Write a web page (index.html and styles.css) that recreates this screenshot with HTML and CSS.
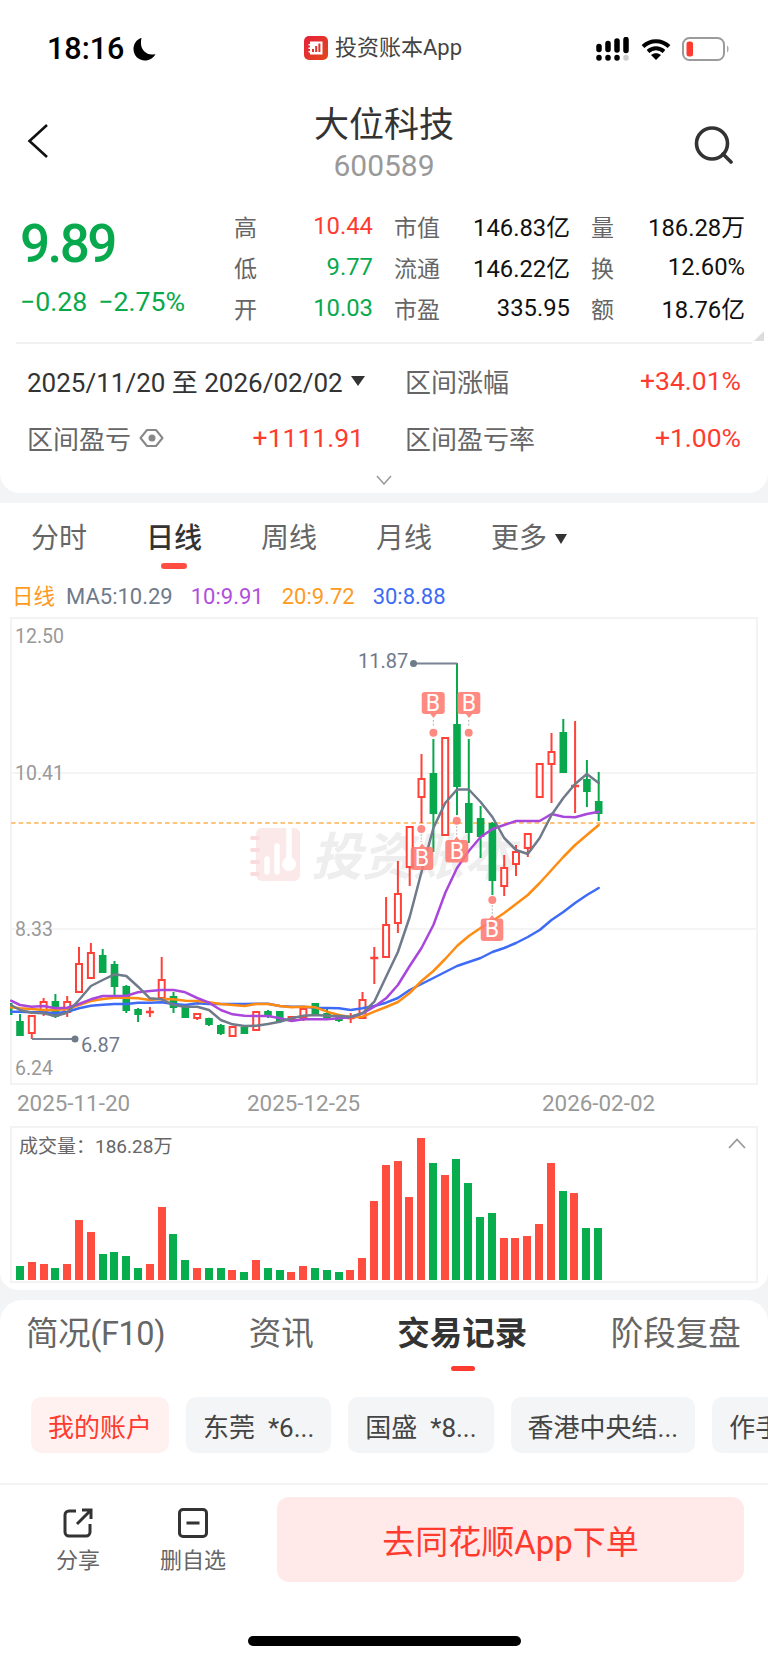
FILE: index.html
```html
<!DOCTYPE html>
<html lang="zh-CN">
<head>
<meta charset="utf-8">
<title>大位科技</title>
<link rel="stylesheet" href="styles.css">
</head>
<body>
<div class="page">
  <section class="card card-top">
    <div class="statusbar">
      <div class="sb-left">
        <span class="sb-time">18:16</span>
        <svg class="sb-moon" width="23" height="24" viewBox="0 0 23 24"><path class="fill-black" d="M8 1C3.500 2.500.5 7 .5 12c0 6.500 5 11.500 11.500 11.500 4.500 0 8.500-2.500 10.500-6.500-1 .4-2.200.6-3.500.6-6.200 0-11-5-11-11 0-1.800 0-3.500.5-5.600z"/></svg>
      </div>
      <div class="sb-center">
        <svg class="sb-logo" width="24" height="24" viewBox="0 0 24 24">
          <defs><linearGradient id="lg" x1="0" y1="0" x2="1" y2="1"><stop offset="0" stop-color="#e5203a"/><stop offset="1" stop-color="#e2491c"/></linearGradient></defs>
          <rect width="24" height="24" rx="5" fill="url(#lg)"/>
          <path class="fill-white" d="M6 5.500h12.500v13H6v-2H4.500v-1.500H6v-2H4.500v-1.500H6v-2H4.500V8H6z"/>
          <path class="logo-bars" d="M9 16v-3M12.200 16V10M15.400 16V7.500"/>
        </svg>
        <span class="sb-app">投资账本App</span>
      </div>
      <div class="sb-right">
        <svg width="34" height="24" viewBox="0 0 34 24">
          <path class="sig" d="M3 9.500v3M12 6.500v6M21 4v9M30 2.500v11"/>
          <path class="sig" d="M3 20.500v.5M12 20.500v.5M21 20.500v.5"/>
          <path class="sig sig-off" d="M30 20.500v.5"/>
        </svg>
        <svg width="32" height="23" viewBox="0 0 32 23">
          <path class="wifi" d="M3 8.500C10.500 1.500 21.500 1.500 29 8.500M8 13.500c4.800-4.200 11.200-4.200 16 0"/>
          <path class="fill-black" d="M16 22l-5-5c3-2.400 7-2.400 10 0z"/>
        </svg>
        <svg width="47" height="24" viewBox="0 0 47 24">
          <rect class="bat" x="1" y="1" width="41" height="22" rx="6.500"/>
          <rect class="bat-fill" x="4.500" y="4.500" width="6.500" height="15" rx="2.500"/>
          <path class="bat-nub" d="M45 8.500c1.200.5 1.500 1.800 1.500 3.500s-.3 3-1.500 3.500z"/>
        </svg>
      </div>
    </div>

    <header class="navbar">
      <svg class="nav-back" width="22" height="36" viewBox="0 0 22 36"><path d="M20 2L2.500 18 20 34"/></svg>
      <div class="nav-title">
        <h1 class="stock-name">大位科技</h1>
        <div class="stock-code">600589</div>
      </div>
      <svg class="nav-search" width="40" height="38" viewBox="0 0 40 38"><circle cx="18" cy="17.500" r="15.500"/><path d="M29 28l8 8"/></svg>
    </header>

    <div class="quote">
      <div class="price-box">
        <div class="price">9.89</div>
        <div class="change"><span>−0.28</span><span>−2.75%</span></div>
      </div>
      <div class="stats">
        <div class="stat"><span class="lab">高</span><span class="val red">10.44</span></div>
        <div class="stat"><span class="lab">市值</span><span class="val">146.83亿</span></div>
        <div class="stat"><span class="lab">量</span><span class="val">186.28万</span></div>
        <div class="stat"><span class="lab">低</span><span class="val green">9.77</span></div>
        <div class="stat"><span class="lab">流通</span><span class="val">146.22亿</span></div>
        <div class="stat"><span class="lab">换</span><span class="val">12.60%</span></div>
        <div class="stat"><span class="lab">开</span><span class="val green">10.03</span></div>
        <div class="stat"><span class="lab">市盈</span><span class="val">335.95</span></div>
        <div class="stat"><span class="lab">额</span><span class="val">18.76亿</span></div>
      </div>
      <span class="corner"></span>
    </div>

    <div class="range">
      <div class="range-cell">
        <span class="range-date">2025/11/20 至 2026/02/02</span><span class="caret"></span>
      </div>
      <div class="range-cell between"><span class="range-lab">区间涨幅</span><span class="range-val">+34.01%</span></div>
      <div class="range-cell between">
        <span class="range-lab with-eye">区间盈亏
          <svg width="25" height="20" viewBox="0 0 25 20"><path class="eye" d="M1.500 10L8 2h9l6.500 8L17 18H8z"/><circle class="eye-dot" cx="13" cy="10" r="3.500"/></svg>
        </span>
        <span class="range-val">+1111.91</span>
      </div>
      <div class="range-cell between"><span class="range-lab">区间盈亏率</span><span class="range-val">+1.00%</span></div>
    </div>
    <svg class="expand" width="16" height="10" viewBox="0 0 16 10"><path d="M1 1l7 8 7-8"/></svg>
  </section>

  <section class="card card-chart">
    <nav class="period-tabs">
      <span class="ptab">分时</span>
      <span class="ptab active">日线</span>
      <span class="ptab">周线</span>
      <span class="ptab">月线</span>
      <span class="ptab">更多<i class="caret caret-lg"></i></span>
    </nav>
    <div class="legend">
      <span class="c-orange">日线</span>
      <span class="c-gray">MA5:10.29</span>
      <span class="c-purple">10:9.91</span>
      <span class="c-orange">20:9.72</span>
      <span class="c-blue">30:8.88</span>
    </div>

    <svg class="kline" width="748" height="468" viewBox="10 617 748 468">
      <rect class="frame" x="11" y="618" width="746" height="466"/>
      <path class="grid" d="M11 773H757M11 929H757"/>
      <!-- watermark -->
      <rect class="wm-logo" x="256" y="828" width="44" height="53" rx="6"/>
      <path class="wm-rings" d="M252 838h6M252 850h6M252 862h6M252 874h6"/>
      <path class="wm-bars" d="M267 872v-13M277 872v-26M289 865v-36"/>
      <circle class="wm-coin" cx="289" cy="864" r="7"/>
      <text class="wm-text" x="311" y="875">投资账本</text>

      <path class="dash" d="M11 823H757"/>

      <!-- falling candles -->
      <rect class="bar-dn" x="10" y="1003" width="2.500" height="12"/>
      <path class="wick-dn" d="M20 1014V1036M55.400 994V1018M102.700 949V973M114.500 961V999M126.300 985V1013M138.100 1008V1022M173.500 992V1013M209 1017.700V1026M220.800 1024V1035M268 1010V1018M279.800 1011V1023M327 1009V1020M338.900 1017V1022M433.400 739V852M457 663V815M468.800 739V843M480.600 806V858M492.400 822V895M563.300 719V773M586.900 760V807M598.700 772V821"/>
      <path class="body-dn" d="M20 1021V1036M55.400 1001V1016.700M102.700 955V973M114.500 964V987M126.300 986V1011M138.100 1009V1015M173.500 996V1008M185.300 1007V1018M209 1018V1025M220.800 1025V1034M244.400 1027V1034M268 1011V1016M279.800 1011V1022M315.300 1003V1015M327 1013V1018M338.900 1017V1021M433.400 773V814M457 724V787M468.800 803V833M480.600 818V837M492.400 823V881M563.300 732V773M586.900 779V792M598.700 801V814"/>

      <!-- rising candles -->
      <path class="wick-up" d="M31.800 1016V1039M43.600 998V1016M67.200 996V1017M79 947V992M90.900 943V978M149.900 1007V1017M161.700 957V998M197.200 1014V1020M232.600 1027V1037M303.400 1007V1021M350.700 1013V1023M362.500 992V1018M374.300 947V984M386.100 897V958M397.900 861V933M409.700 827V886M421.500 754V823M504.200 855V896M516 845V876M527.800 833V857M551.500 733V803M575.100 721V813"/>
      <path class="body-up" d="M28.800 1016h6v17h-6zM40.600 1002h6v10h-6zM64.200 1002h6v10h-6zM76 964h6v28h-6zM87.900 953h6v25h-6zM158.700 980h6v18h-6zM194.200 1014h6v4h-6zM229.600 1027h6v9h-6zM253.200 1012h6v18h-6zM288.600 1017h6v3h-6zM300.400 1009h6v9h-6zM359.500 1000h6v18h-6zM383.100 925h6v32h-6zM394.900 894h6v29h-6zM406.700 827h6v40h-6zM418.500 779h6v18h-6zM442.200 738h6v97h-6zM501.200 868h6v18h-6zM513 852h6v12h-6zM524.800 834h6v14h-6zM536.700 764h6v33h-6zM548.500 752h6v12h-6z"/>
      <path class="doji" d="M145.900 1012h8M346.700 1018h8M370.300 958h8M571.100 786h8"/>

      <!-- moving averages -->
      <polyline class="ma ma30" points="11,1011.700 20,1011.700 31.800,1012.300 43.600,1012.300 55.400,1013.300 67.200,1011.700 79,1008.300 90.900,1005.700 102.700,1004.700 114.500,1004 126.300,1004 138.100,1002.700 149.900,1002.700 161.700,1002.300 173.500,1004 185.300,1005 197.200,1003.300 209,1004 220.800,1004 232.600,1004 244.400,1004 256.200,1003.700 268,1003.700 279.800,1006 291.600,1006.700 303.400,1006.700 315.300,1007.700 327,1008 338.900,1008.300 350.700,1010 362.500,1008.300 374.300,1006 386.100,1002.700 397.900,998 409.700,990 421.500,984 433.400,978 445.200,972 457,966 468.800,962 480.600,958 492.400,952 504.200,948 516,943 527.800,937 539.700,930 551.500,920 563.300,912 575.100,903 586.900,895 598.700,888"/>
      <polyline class="ma ma20" points="11,1007.300 20,1008.300 31.800,1009 43.600,1010 55.400,1010 67.200,1009 79,1005 90.900,1001 102.700,999 114.500,997.700 126.300,997.700 138.100,998.300 149.900,1000 161.700,999 173.500,999.300 185.300,1000.700 197.200,1001 209,1002.300 220.800,1004 232.600,1005 244.400,1006 256.200,1004 268,1004 279.800,1006 291.600,1007.300 303.400,1006.700 315.300,1007.300 327,1011.700 338.900,1015 350.700,1017.300 362.500,1016.700 374.300,1011.700 386.100,1007 397.900,1002 409.700,993 421.500,981 433.400,971 445.200,959 457,946 468.800,936 480.600,928 492.400,921 504.200,913 516,904 527.800,895 539.700,883 551.500,870 563.300,857 575.100,845 586.900,835 598.700,825"/>
      <polyline class="ma ma10" points="11,1000.700 20,1005 31.800,1006.700 43.600,1006 55.400,1008.300 67.200,1007.700 79,1004 90.900,999.300 102.700,996 114.500,996 126.300,995.700 138.100,992.300 149.900,991 161.700,990 173.500,990 185.300,992.300 197.200,998 209,1002.700 220.800,1010 232.600,1014.300 244.400,1015.700 256.200,1016 268,1016 279.800,1018.300 291.600,1021 303.400,1019.300 315.300,1019.300 327,1019.300 338.900,1018.300 350.700,1017.300 362.500,1013.300 374.300,1006.700 386.100,998.300 397.900,985 409.700,966 421.500,948 433.400,925 445.200,893 457,868 468.800,851 480.600,837 492.400,829 504.200,825 516,821 527.800,821 539.700,821 551.500,814 563.300,816.700 575.100,817.300 586.900,814 598.700,811.700"/>
      <polyline class="ma ma5" points="11,1005 20,1010 31.800,1012.700 43.600,1013.300 55.400,1016 67.200,1012.700 79,1000 90.900,986 102.700,980 114.500,974.300 126.300,976 138.100,986.700 149.900,998.300 161.700,999.300 173.500,1005 185.300,1006.700 197.200,1006.700 209,1010 220.800,1020 232.600,1024.300 244.400,1026 256.200,1025.700 268,1024 279.800,1021.700 291.600,1018.300 303.400,1015.700 315.300,1015 327,1015.700 338.900,1016 350.700,1016.700 362.500,1013.300 374.300,1001.700 386.100,976.700 397.900,952 409.700,917 421.500,872 433.400,828 445.200,803 457,789.500 468.800,789.500 480.600,802 492.400,817 504.200,838 516,850 527.800,854 539.700,838 551.500,815 563.300,798 575.100,784 586.900,774 598.700,783"/>

      <!-- high and low markers -->
      <path class="marker" d="M413 663.500H457M32 1039H75"/>
      <circle class="marker-dot" cx="413.500" cy="663.500" r="3.500"/>
      <circle class="marker-dot" cx="75" cy="1039" r="3.500"/>
      <text class="mark-text" x="358" y="668">11.87</text>
      <text class="mark-text" x="81" y="1052">6.87</text>

      <!-- trade badges -->
      <g class="trades">
        <path class="pin" d="M433.400 720V727M468.700 720V727M421.300 834V842M456.700 826V835M492.300 905V914"/>
        <circle cx="433.400" cy="732.700" r="4"/>
        <circle cx="468.700" cy="732.700" r="4"/>
        <circle cx="421.300" cy="829" r="4"/>
        <circle cx="456.700" cy="820.700" r="4"/>
        <circle cx="492.300" cy="900" r="4"/>
        <path d="M424.700 692h17a3 3 0 0 1 3 3v16a3 3 0 0 1-3 3h-5l-3.200 4-3.200-4h-5.600a3 3 0 0 1-3-3v-16a3 3 0 0 1 3-3z"/>
        <path d="M460.300 692h17a3 3 0 0 1 3 3v16a3 3 0 0 1-3 3h-5l-3.200 4-3.200-4h-5.600a3 3 0 0 1-3-3v-16a3 3 0 0 1 3-3z"/>
        <path d="M413.700 847h5.600l2.800-3.500 2.800 3.500h5.400a3 3 0 0 1 3 3v17a3 3 0 0 1-3 3h-16.600a3 3 0 0 1-3-3v-17a3 3 0 0 1 3-3z"/>
        <path d="M448.300 840h5.600l2.800-3.500 2.800 3.500h5.800a3 3 0 0 1 3 3v16.500a3 3 0 0 1-3 3h-17a3 3 0 0 1-3-3v-16.500a3 3 0 0 1 3-3z"/>
        <path d="M483.700 918.500h5.600l2.800-3.500 2.800 3.500h5.400a3 3 0 0 1 3 3v16.500a3 3 0 0 1-3 3h-16.600a3 3 0 0 1-3-3v-16.500a3 3 0 0 1 3-3z"/>
      </g>
      <text class="b-text" x="433" y="711">B</text>
      <text class="b-text" x="469" y="711">B</text>
      <text class="b-text" x="422" y="866">B</text>
      <text class="b-text" x="457" y="859">B</text>
      <text class="b-text" x="492" y="937">B</text>

      <text class="axis" x="15" y="643">12.50</text>
      <text class="axis" x="15" y="780">10.41</text>
      <text class="axis" x="15" y="936">8.33</text>
      <text class="axis" x="15" y="1075">6.24</text>
    </svg>

    <div class="dates"><span>2025-11-20</span><span>2025-12-25</span><span>2026-02-02</span></div>

    <div class="volume">
      <div class="vol-head">
        <span>成交量：186.28万</span>
        <svg width="18" height="11" viewBox="0 0 18 11"><path d="M1 10l8-8.500 8 8.500"/></svg>
      </div>
      <div class="vol-bars">
        <i class="g" style="height:14px"></i><i class="r" style="height:18px"></i><i class="r" style="height:16px"></i><i class="g" style="height:12px"></i><i class="r" style="height:16px"></i>
        <i class="r" style="height:60px"></i><i class="r" style="height:48px"></i><i class="g" style="height:26px"></i><i class="g" style="height:28px"></i><i class="g" style="height:24px"></i>
        <i class="g" style="height:12px"></i><i class="r" style="height:16px"></i><i class="r" style="height:73px"></i><i class="g" style="height:46px"></i><i class="g" style="height:20px"></i>
        <i class="r" style="height:12px"></i><i class="g" style="height:12px"></i><i class="g" style="height:12px"></i><i class="r" style="height:10px"></i><i class="g" style="height:8px"></i>
        <i class="r" style="height:20px"></i><i class="g" style="height:12px"></i><i class="g" style="height:10px"></i><i class="r" style="height:8px"></i><i class="r" style="height:14px"></i>
        <i class="g" style="height:12px"></i><i class="g" style="height:10px"></i><i class="g" style="height:8px"></i><i class="r" style="height:10px"></i><i class="r" style="height:22px"></i>
        <i class="r" style="height:79px"></i><i class="r" style="height:115px"></i><i class="r" style="height:119px"></i><i class="r" style="height:83px"></i><i class="r" style="height:142px"></i>
        <i class="g" style="height:117px"></i><i class="r" style="height:105px"></i><i class="g" style="height:121px"></i><i class="g" style="height:97px"></i><i class="g" style="height:63px"></i>
        <i class="g" style="height:67px"></i><i class="r" style="height:42px"></i><i class="r" style="height:42px"></i><i class="r" style="height:44px"></i><i class="r" style="height:56px"></i>
        <i class="r" style="height:117px"></i><i class="g" style="height:89px"></i><i class="r" style="height:87px"></i><i class="g" style="height:52px"></i><i class="g" style="height:52px"></i>
      </div>
    </div>
  </section>

  <section class="card card-bottom">
    <nav class="info-tabs">
      <span class="itab itab-first">简况(F10)</span>
      <span class="itab">资讯</span>
      <span class="itab active">交易记录</span>
      <span class="itab">阶段复盘</span>
    </nav>
    <div class="chips">
      <span class="chip chip-on">我的账户</span>
      <span class="chip">东莞  *6...</span>
      <span class="chip">国盛  *8...</span>
      <span class="chip">香港中央结...</span>
      <span class="chip">作手...</span>
    </div>
    <div class="actions">
      <div class="action">
        <svg width="30" height="30" viewBox="0 0 30 30"><path d="M13 3H6a4 4 0 0 0-4 4v17a4 4 0 0 0 4 4h17a4 4 0 0 0 4-4v-8"/><path d="M14 16L27 3M19 2h9v9"/></svg>
        <span>分享</span>
      </div>
      <div class="action action-wide">
        <svg width="30" height="30" viewBox="0 0 30 30"><rect x="1.500" y="1.500" width="27" height="27" rx="3.500"/><path d="M8.500 15h13"/></svg>
        <span>删自选</span>
      </div>
      <button class="order-btn" type="button">去同花顺App下单</button>
    </div>
    <div class="home-bar"></div>
  </section>
</div>
</body>
</html>
```
FILE: styles.css
```css
* { box-sizing: border-box; }
html, body { margin: 0; padding: 0; }
body {
  width: 768px;
  height: 1663px;
  overflow: hidden;
  background: #f3f4f6;
  font-family: Roboto, "Noto Sans CJK SC", sans-serif;
  color: #222;
}
.page { width: 768px; height: 1663px; display: flex; flex-direction: column; }
.card { background: #fff; position: relative; }
.card-top { height: 493px; border-radius: 0 0 20px 20px; }
.card-chart { height: 787px; margin-top: 10px; border-radius: 0 0 18px 18px; }
.card-bottom { flex: 1; margin-top: 10px; border-radius: 22px 22px 0 0; overflow: hidden; }

.fill-black { fill: #000; }
.fill-white { fill: #fff; }

/* status bar */
.statusbar { height: 96px; display: grid; grid-template-columns: 1fr auto 1fr; align-items: center; padding: 2px 39px 0 47px; }
.sb-left { display: flex; align-items: center; gap: 9px; }
.sb-time { font-size: 30.500px; font-weight: 500; color: #000; line-height: 1; }
.sb-moon { display: block; }
.sb-center { display: flex; align-items: center; gap: 7px; margin: -2px 0 0 -10px; }
.sb-logo { display: block; }
.logo-bars { stroke: #e2322a; stroke-width: 2; fill: none; }
.sb-app { font-size: 22px; color: #444; line-height: 28px; }
.sb-right { display: flex; align-items: center; justify-content: flex-end; gap: 10px; }
.sb-right svg { display: block; }
.sig { stroke: #000; stroke-width: 5.500; stroke-linecap: round; fill: none; }
.sig-off { stroke: #ccc; }
.wifi { stroke: #000; stroke-width: 4; fill: none; }
.bat { fill: #fff; stroke: #9b9b9b; stroke-width: 2; }
.bat-fill { fill: #ff3b30; }
.bat-nub { fill: #aaa; }

/* navbar */
.navbar { height: 91px; display: grid; grid-template-columns: 1fr auto 1fr; align-items: start; padding: 10px 30px 0; }
.nav-back { margin: 17px 0 0 -3px; fill: none; stroke: #111; stroke-width: 2.600; display: block; }
.nav-title { text-align: center; }
.stock-name { margin: 0; font-size: 35px; font-weight: 400; line-height: 40px; color: #333; }
.stock-code { font-size: 30px; line-height: 40px; color: #999; }
.nav-search { justify-self: end; margin: 20px 4px 0 0; display: block; fill: none; stroke: #333; stroke-width: 3.600; stroke-linecap: round; }

/* quote */
.quote { position: relative; display: flex; height: 157px; margin: 0 16px; padding-top: 18px; border-bottom: 2px solid #f1f1f1; }
.price-box { width: 219px; padding-left: 4px; }
.price { margin-top: 9px; font-size: 53px; line-height: 60px; font-weight: 500; color: #08a94c; letter-spacing: -2.600px; }
.change { margin-top: 12px; display: flex; gap: 11px; font-size: 26.700px; line-height: 32px; color: #08a94c; white-space: nowrap; }
.stats { width: 510px; flex: none; display: grid; grid-template-columns: 138px 175px 153px; column-gap: 22px; grid-auto-rows: 41px; }
.stat { display: flex; justify-content: space-between; align-items: center; font-size: 23.800px; }
.lab { color: #666; font-size: 23px; margin-left: -1px; }
.val { color: #111; }
.red { color: #ff3b30; }
.green { color: #08a94c; }
.corner { position: absolute; right: -12px; top: 144px; width: 0; height: 0; border-style: solid; border-width: 0 0 10px 10px; border-color: transparent transparent #ddd transparent; }

/* range */
.range { display: grid; grid-template-columns: 337px 336px; column-gap: 41px; grid-auto-rows: 57px; padding: 8px 27px 0; }
.range-cell { display: flex; align-items: center; font-size: 26.500px; }
.between { justify-content: space-between; }
.range-date { color: #333; font-size: 26px; white-space: nowrap; }
.range-lab { color: #666; font-size: 26px; display: flex; align-items: center; gap: 8px; }
.range-val { color: #ff3b30; }
.caret { display: inline-block; margin-left: 8px; width: 0; height: 0; border-style: solid; border-width: 10px 7px 0; border-color: #333 transparent transparent; }
.eye { fill: none; stroke: #888; stroke-width: 2; stroke-linejoin: round; }
.eye-dot { fill: #888; }
.expand { display: block; margin: 9px auto 0; fill: none; stroke: #999; stroke-width: 1.500; }

/* period tabs */
.period-tabs { display: flex; gap: 59px; height: 66px; padding: 19px 0 0 31px; }
.ptab { position: relative; font-size: 28px; line-height: 34px; color: #666; white-space: nowrap; }
.ptab.active { color: #333; font-weight: 500; }
.ptab.active::after { content: ""; position: absolute; left: 15px; top: 41px; width: 26px; height: 6px; border-radius: 3px; background: #ff4d42; }
.caret-lg { margin-left: 8px; border-width: 10px 6.500px 0; vertical-align: 4px; }

.legend { display: flex; margin: 14px 0 6px; padding-left: 12px; gap: 18px; font-size: 22px; line-height: 28px; white-space: nowrap; }
.legend span:first-child { font-size: 21.500px; margin-right: -7px; }
.c-orange { color: #ff9a1f; }
.c-gray { color: #6f7a8a; }
.c-purple { color: #b14fdc; }
.c-blue { color: #3d6bf5; }

/* chart */
.kline { display: block; margin-left: 10px; }
.frame { fill: none; stroke: #f3f3f3; stroke-width: 2; }
.grid { stroke: #f4f4f4; stroke-width: 2; fill: none; }
.wm-logo { fill: #fbe8e8; }
.wm-rings { fill: none; stroke: #fbdcdc; stroke-width: 4; stroke-linecap: round; }
.wm-bars { fill: none; stroke: #fff; stroke-width: 5.500; stroke-linecap: round; }
.wm-coin { fill: #fff; }
.wm-text { font-family: "Noto Sans CJK SC", sans-serif; font-size: 51px; font-weight: 700; font-style: italic; fill: #eeeeee; }
.dash { stroke: #ffc37a; stroke-width: 1.800; stroke-dasharray: 4.500 3.200; fill: none; }
.bar-dn { fill: #08a94c; }
.wick-dn { stroke: #08a94c; stroke-width: 2; fill: none; }
.body-dn { stroke: #08a94c; stroke-width: 7.600; fill: none; }
.wick-up { stroke: #ff4138; stroke-width: 2; fill: none; }
.body-up { stroke: #ff4138; stroke-width: 2; fill: #fff; }
.doji { stroke: #ff4138; stroke-width: 2.400; fill: none; }
.ma { fill: none; stroke-width: 2.500; stroke-linejoin: round; stroke-linecap: round; }
.ma5 { stroke: #6f7a8a; }
.ma10 { stroke: #a947dc; }
.ma20 { stroke: #ff8c12; }
.ma30 { stroke: #3d6bf5; }
.marker { stroke: #7a8494; stroke-width: 1.800; fill: none; }
.marker-dot { fill: #6f7a8a; }
.mark-text { font-size: 20px; fill: #6f7a8a; }
.trades { fill: #ff7a70; opacity: .88; }
.pin { fill: none; stroke: #bbb; stroke-width: 1.200; stroke-dasharray: 2 1.500; }
.b-text { font-size: 23px; fill: #fff; text-anchor: middle; }
.axis { font-size: 19.500px; fill: #999; }

.dates { height: 35px; display: flex; align-items: center; padding-left: 17px; font-size: 22.400px; color: #999; }
.dates span:nth-child(1) { width: 230px; }
.dates span:nth-child(2) { width: 295px; }

.volume { position: relative; height: 157px; margin: 6px 10px 0; border: 2px solid #f3f3f3; }
.vol-head { display: flex; justify-content: space-between; align-items: center; height: 32px; padding: 0 10px 0 7px; font-size: 19px; color: #666; }
.vol-head svg { fill: none; stroke: #999; stroke-width: 1.800; margin-top: -2px; }
.vol-bars { position: absolute; left: 4px; right: 0; bottom: 1px; display: flex; align-items: flex-end; gap: 3.810px; }
.vol-bars i { display: block; width: 8px; flex: none; }
.vol-bars .r { background: #ff4d3f; }
.vol-bars .g { background: #08ad4e; }

/* info tabs */
.info-tabs { display: flex; gap: 83.500px; height: 71px; padding: 14px 0 0 26px; }
.itab { position: relative; font-size: 32.500px; line-height: 40px; color: #666; white-space: nowrap; }
.itab-first { letter-spacing: -.4px; }
.itab.active { color: #333; font-weight: 700; }
.itab.active::after { content: ""; position: absolute; left: 54px; top: 52px; width: 24px; height: 5px; border-radius: 2.500px; background: #ff3b30; }

.chips { display: flex; gap: 17px; margin-top: 26px; padding-left: 31px; }
.chip { flex: none; height: 56px; padding: 0 17px; display: flex; align-items: center; font-size: 26px; color: #444; background: #f4f5f7; border-radius: 10px; white-space: pre; }
.chip-on { color: #ff3b30; background: #fff1f0; }

.actions { display: flex; align-items: flex-start; margin-top: 30px; padding: 12px 24px 0 56px; border-top: 2px solid #f3f3f3; height: 99px; }
.action { width: 44px; margin-right: 60px; padding-top: 11px; display: flex; flex-direction: column; align-items: center; font-size: 22px; color: #666; line-height: 30px; white-space: nowrap; gap: 8px; }
.action-wide { width: 66px; margin-right: 51px; }
.action svg { display: block; fill: none; stroke: #333; stroke-width: 3; }
.order-btn { flex: 1; height: 85px; border: 0; border-radius: 12px; background: #ffe9e9; color: #ff3b30; font-family: inherit; font-size: 33px; }
.home-bar { width: 273px; height: 10px; margin: 54px auto 0; border-radius: 5px; background: #000; }
```
